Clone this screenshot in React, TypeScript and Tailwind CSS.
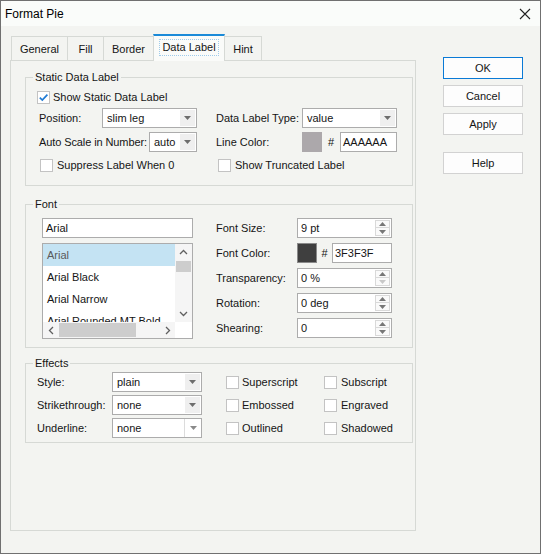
import React from "react";

const Tri = ({ up, color = "#6d6d6d" }: { up?: boolean; color?: string }) => (
  <svg width="7" height="4" viewBox="0 0 7 4">
    <path d={up ? "M0 4H7L3.5 0Z" : "M0 0H7L3.5 4Z"} fill={color} />
  </svg>
);

function Check({ checked }: { checked?: boolean }) {
  return (
    <span className="w-[13px] h-[13px] border border-[#c3c3c3] bg-white flex items-center justify-center shrink-0">
      {checked && (
        <svg width="11" height="11" viewBox="0 0 11 11">
          <path d="M1.8 5.6 L4.3 8 L9.4 2.6" stroke="#1f7bd4" strokeWidth="1.7" fill="none" />
        </svg>
      )}
    </span>
  );
}

function Select({ cls, value, editable }: { cls: string; value: string; editable?: boolean }) {
  return (
    <div className={`h-[20px] border border-[#acacac] bg-white flex items-center shrink-0 ${cls}`}>
      <span className="flex-1 pl-[4px] leading-none truncate">{value}</span>
      {editable ? (
        <span className="w-[17px] h-[18px] border-l border-[#dcdcdc] bg-white flex items-center justify-center">
          <Tri color="#8a8a8a" />
        </span>
      ) : (
        <span className="w-[15px] h-[16px] mr-[1px] bg-[#efefef] flex items-center justify-center">
          <Tri />
        </span>
      )}
    </div>
  );
}

function Spin({ value, downDisabled }: { value: string; downDisabled?: boolean }) {
  return (
    <div className="h-[20px] w-[95px] border border-[#acacac] bg-white flex items-center">
      <span className="flex-1 pl-[3px] leading-none">{value}</span>
      <span className="w-[15px] h-[16px] mr-[1px] flex flex-col">
        <span className="h-[8px] border border-[#d9d9d9] bg-[#fafafa] flex items-center justify-center">
          <svg width="7" height="4" viewBox="0 0 7 4"><path d="M0 4H7L3.5 0Z" fill="#777" /></svg>
        </span>
        <span className="h-[8px] border border-t-0 border-[#d9d9d9] bg-[#fafafa] flex items-center justify-center">
          <svg width="7" height="4" viewBox="0 0 7 4"><path d="M0 0H7L3.5 4Z" fill={downDisabled ? "#c8c8c8" : "#777"} /></svg>
        </span>
      </span>
    </div>
  );
}

function Group({ title, cls, children }: { title: string; cls: string; children: React.ReactNode }) {
  return (
    <fieldset className={`w-[388px] border border-[#d6d9d5] ${cls}`}>
      <legend className="ml-[7px] px-[2px] h-[14px] leading-[14px]">{title}</legend>
      {children}
    </fieldset>
  );
}

const Chevron = ({ d }: { d: string }) => (
  <svg width="9" height="9" viewBox="0 0 9 9">
    <path d={d} stroke="#606060" strokeWidth="1.3" fill="none" />
  </svg>
);

export default function App() {
  const tabs = ["General", "Fill", "Border", "Data Label", "Hint"];
  const tabW = ["w-[57px]", "w-[37px]", "w-[51px]", "w-[72px]", "w-[38px]"];
  return (
    <div className="w-[541px] h-[554px] border border-[#707070] bg-[#f3f4f1] flex flex-col text-[11px] text-[#151515] whitespace-nowrap font-['Liberation_Sans',Arial,sans-serif]">
      <div className="h-[25px] bg-[#fafcfa] flex items-center justify-between pl-[4px] pr-[9px] shrink-0">
        <span className="text-[12px] text-black">Format Pie</span>
        <svg width="12" height="12" viewBox="0 0 12 12">
          <path d="M1 1L11 11M11 1L1 11" stroke="#222" strokeWidth="1.1" />
        </svg>
      </div>
      <div className="flex">
        <div className="ml-[9px] mt-[8px] flex flex-col">
          <div className="flex items-end ml-[1px] h-[27px] relative z-10">
            {tabs.map((t, i) =>
              t === "Data Label" ? (
                <div key={t} className={`${tabW[i]} h-[27px] -ml-[1px] border-t-2 border-t-[#1a8ad8] border-x border-[#d6d9d5] bg-[#fafbf9] flex items-start justify-center pt-[3px]`}>
                  <span className="border border-dotted border-[#9fcbeb] px-[2px] h-[17px] leading-[15px]">{t}</span>
                </div>
              ) : (
                <div key={t} className={`${tabW[i]} h-[25px] ${i === 0 ? "" : "-ml-[1px]"} border border-b-0 border-[#d6d9d5] flex items-center justify-center pt-[1px]`}>
                  {t}
                </div>
              )
            )}
          </div>
          <div className="w-[406px] h-[471px] border border-[#d6d9d5] -mt-[1px] px-[14px] pt-[9px]">
            <Group title="Static Data Label" cls="pb-[10px]">
              <div className="h-[19px] mt-[4px] flex items-center ml-[11px] gap-[3px]">
                <Check checked />
                <span>Show Static Data Label</span>
              </div>
              <div className="h-[20px] mt-[1px] flex items-center">
                <span className="ml-[13px] w-[63px] shrink-0">Position:</span>
                <Select cls="w-[95px]" value="slim leg" />
                <span className="ml-[19px] w-[86px] shrink-0">Data Label Type:</span>
                <Select cls="w-[95px]" value="value" />
              </div>
              <div className="h-[20px] mt-[4px] flex items-center">
                <span className="ml-[13px] w-[110px] shrink-0 tracking-[-0.1px]">Auto Scale in Number:</span>
                <Select cls="w-[48px]" value="auto" />
                <span className="ml-[19px] w-[86px] shrink-0">Line Color:</span>
                <span className="w-[20px] h-[20px] bg-[#aca8ab] shrink-0" />
                <span className="w-[18px] text-center shrink-0">#</span>
                <span className="w-[57px] h-[20px] border border-[#acacac] bg-white flex items-center pl-[2px] shrink-0">AAAAAA</span>
              </div>
              <div className="h-[19px] mt-[4px] flex items-center">
                <span className="ml-[14px] w-[178px] flex items-center gap-[4px] shrink-0">
                  <Check />
                  <span>Suppress Label When 0</span>
                </span>
                <Check />
                <span className="ml-[4px]">Show Truncated Label</span>
              </div>
            </Group>

            <Group title="Font" cls="mt-[11px] pb-[8px]">
              <div className="flex mt-[7px]">
                <div className="ml-[16px] w-[151px] flex flex-col">
                  <div className="h-[20px] border border-[#acacac] bg-white flex items-center pl-[3px]">Arial</div>
                  <div className="h-[96px] mt-[5px] border border-[#acacac] bg-white flex flex-col">
                    <div className="flex h-[78px]">
                      <div className="flex-1 overflow-hidden">
                        <div className="h-[22px] bg-[#c4e3f3] flex items-center pl-[4px] text-[#5a5a5a]">Arial</div>
                        <div className="h-[22px] flex items-center pl-[4px]">Arial Black</div>
                        <div className="h-[22px] flex items-center pl-[4px]">Arial Narrow</div>
                        <div className="h-[22px] flex items-center pl-[4px]">Arial Rounded MT Bold</div>
                      </div>
                      <div className="w-[17px] bg-[#f5f5f5] flex flex-col items-center">
                        <span className="h-[17px] flex items-center"><Chevron d="M1 6L4.5 2.5L8 6" /></span>
                        <span className="w-[15px] h-[11px] bg-[#cdcdcd]" />
                        <span className="flex-1" />
                        <span className="h-[17px] flex items-center"><Chevron d="M1 3L4.5 6.5L8 3" /></span>
                      </div>
                    </div>
                    <div className="flex h-[16px]">
                      <div className="flex-1 bg-[#f5f5f5] flex items-center">
                        <span className="w-[16px] flex justify-center"><Chevron d="M6 1L2.5 4.5L6 8" /></span>
                        <span className="w-[77px] h-[14px] bg-[#cdcdcd]" />
                        <span className="flex-1" />
                        <span className="w-[16px] flex justify-center"><Chevron d="M3 1L6.5 4.5L3 8" /></span>
                      </div>
                      <div className="w-[17px] bg-white" />
                    </div>
                  </div>
                </div>
                <div className="ml-[23px] flex flex-col gap-[5px]">
                  <div className="flex items-center h-[20px]">
                    <span className="w-[81px]">Font Size:</span>
                    <Spin value="9 pt" />
                  </div>
                  <div className="flex items-center h-[20px]">
                    <span className="w-[81px]">Font Color:</span>
                    <span className="w-[20px] h-[20px] bg-[#3f3f3f] border border-[#8a8a8a]" />
                    <span className="w-[15px] text-center">#</span>
                    <span className="w-[60px] h-[20px] border border-[#acacac] bg-white flex items-center pl-[2px]">3F3F3F</span>
                  </div>
                  <div className="flex items-center h-[20px]">
                    <span className="w-[81px]">Transparency:</span>
                    <Spin value="0 %" downDisabled />
                  </div>
                  <div className="flex items-center h-[20px]">
                    <span className="w-[81px]">Rotation:</span>
                    <Spin value="0 deg" />
                  </div>
                  <div className="flex items-center h-[20px]">
                    <span className="w-[81px]">Shearing:</span>
                    <Spin value="0" />
                  </div>
                </div>
              </div>
            </Group>

            <Group title="Effects" cls="mt-[8px] pb-[4px]">
              <div className="flex flex-col gap-[3px] mt-[2px]">
                {[
                  ["Style:", "plain", "Superscript", "Subscript"],
                  ["Strikethrough:", "none", "Embossed", "Engraved"],
                  ["Underline:", "none", "Outlined", "Shadowed"],
                ].map(([l, v, a, b], i) => (
                  <div key={l} className="flex items-center h-[20px]">
                    <span className="ml-[11px] w-[75px] shrink-0">{l}</span>
                    <Select cls="w-[90px]" value={v} editable={i === 2} />
                    <span className="ml-[24px] w-[98px] flex items-center gap-[3px] shrink-0">
                      <Check />
                      <span>{a}</span>
                    </span>
                    <span className="flex items-center gap-[4px]">
                      <Check />
                      <span>{b}</span>
                    </span>
                  </div>
                ))}
              </div>
            </Group>
          </div>
        </div>
        <div className="ml-[27px] mt-[31px] flex flex-col w-[80px]">
          <button className="h-[22px] border border-[#0a7ad6] bg-[#fdfdfd] text-[#151515]">OK</button>
          <button className="h-[22px] mt-[6px] border border-[#d2d2d2] bg-[#fdfdfd]">Cancel</button>
          <button className="h-[22px] mt-[6px] border border-[#d2d2d2] bg-[#fdfdfd]">Apply</button>
          <button className="h-[22px] mt-[17px] border border-[#d2d2d2] bg-[#fdfdfd]">Help</button>
        </div>
      </div>
    </div>
  );
}
